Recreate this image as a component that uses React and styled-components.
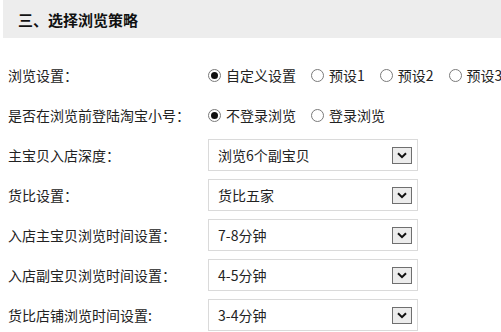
import React, { useState } from "react";
import styled, { createGlobalStyle } from "styled-components";

const Global = createGlobalStyle`
  html, body { margin: 0; padding: 0; background: #fff; }
  body { font-family: "Noto Sans CJK SC", "Microsoft YaHei", sans-serif; color: #222; }
  * { box-sizing: border-box; }
`;

const Page = styled.div`
  width: 501px;
  padding-left: 3px;
  overflow: hidden;
`;

const Header = styled.div`
  height: 38px;
  background: #ededed;
  display: flex;
  align-items: center;
  padding-left: 15px;
  font-size: 15px;
  font-weight: bold;
  color: #111;
`;

const Form = styled.div`
  display: flex;
  flex-direction: column;
  gap: 8px;
  margin-top: 21px;
  padding-left: 5px;
`;

const Row = styled.div`
  display: flex;
  align-items: center;
  height: 32px;
`;

const Label = styled.div`
  width: 200px;
  flex-shrink: 0;
  font-size: 14px;
  white-space: nowrap;
  color: #222;
`;

const RadioGroup = styled.div`
  display: flex;
  align-items: center;
  white-space: nowrap;
  flex-shrink: 0;
`;

const RadioItem = styled.label`
  display: flex;
  align-items: center;
  gap: 5px;
  margin-right: 15px;
  font-size: 14px;
  cursor: pointer;
  color: #222;
`;

const Circle = styled.span`
  width: 13px;
  height: 13px;
  border-radius: 50%;
  border: 1px solid #7a7a7a;
  display: flex;
  align-items: center;
  justify-content: center;
  background: #fff;
  &::after {
    content: "";
    width: 7px;
    height: 7px;
    border-radius: 50%;
    background: ${(p) => (p.$on ? "#111" : "transparent")};
  }
`;

const Select = styled.div`
  width: 210px;
  height: 32px;
  border: 1px solid #dadada;
  display: flex;
  align-items: center;
  justify-content: space-between;
  padding: 0 5px 0 9px;
  font-size: 14px;
  color: #222;
`;

const DropBtn = styled.span`
  width: 20px;
  height: 17px;
  border: 1px solid #6f6f6f;
  background: #ececec;
  display: flex;
  align-items: center;
  justify-content: center;
`;

function Radios({ options, value }) {
  const [v, setV] = useState(value);
  return (
    <RadioGroup>
      {options.map((o) => (
        <RadioItem key={o} onClick={() => setV(o)}>
          <Circle $on={v === o} />
          {o}
        </RadioItem>
      ))}
    </RadioGroup>
  );
}

function Dropdown({ value }) {
  return (
    <Select>
      <span>{value}</span>
      <DropBtn>
        <svg width="10" height="7" viewBox="0 0 10 7">
          <path d="M1 1.2 L5 5.2 L9 1.2" fill="none" stroke="#111" strokeWidth="2" />
        </svg>
      </DropBtn>
    </Select>
  );
}

const selects = [
  ["主宝贝入店深度：", "浏览6个副宝贝"],
  ["货比设置：", "货比五家"],
  ["入店主宝贝浏览时间设置：", "7-8分钟"],
  ["入店副宝贝浏览时间设置：", "4-5分钟"],
  ["货比店铺浏览时间设置:", "3-4分钟"],
];

export default function App() {
  return (
    <Page>
      <Global />
      <Header>三、选择浏览策略</Header>
      <Form>
        <Row>
          <Label>浏览设置：</Label>
          <Radios options={["自定义设置", "预设1", "预设2", "预设3"]} value="自定义设置" />
        </Row>
        <Row>
          <Label>是否在浏览前登陆淘宝小号：</Label>
          <Radios options={["不登录浏览", "登录浏览"]} value="不登录浏览" />
        </Row>
        {selects.map(([l, v]) => (
          <Row key={l}>
            <Label>{l}</Label>
            <Dropdown value={v} />
          </Row>
        ))}
      </Form>
    </Page>
  );
}
